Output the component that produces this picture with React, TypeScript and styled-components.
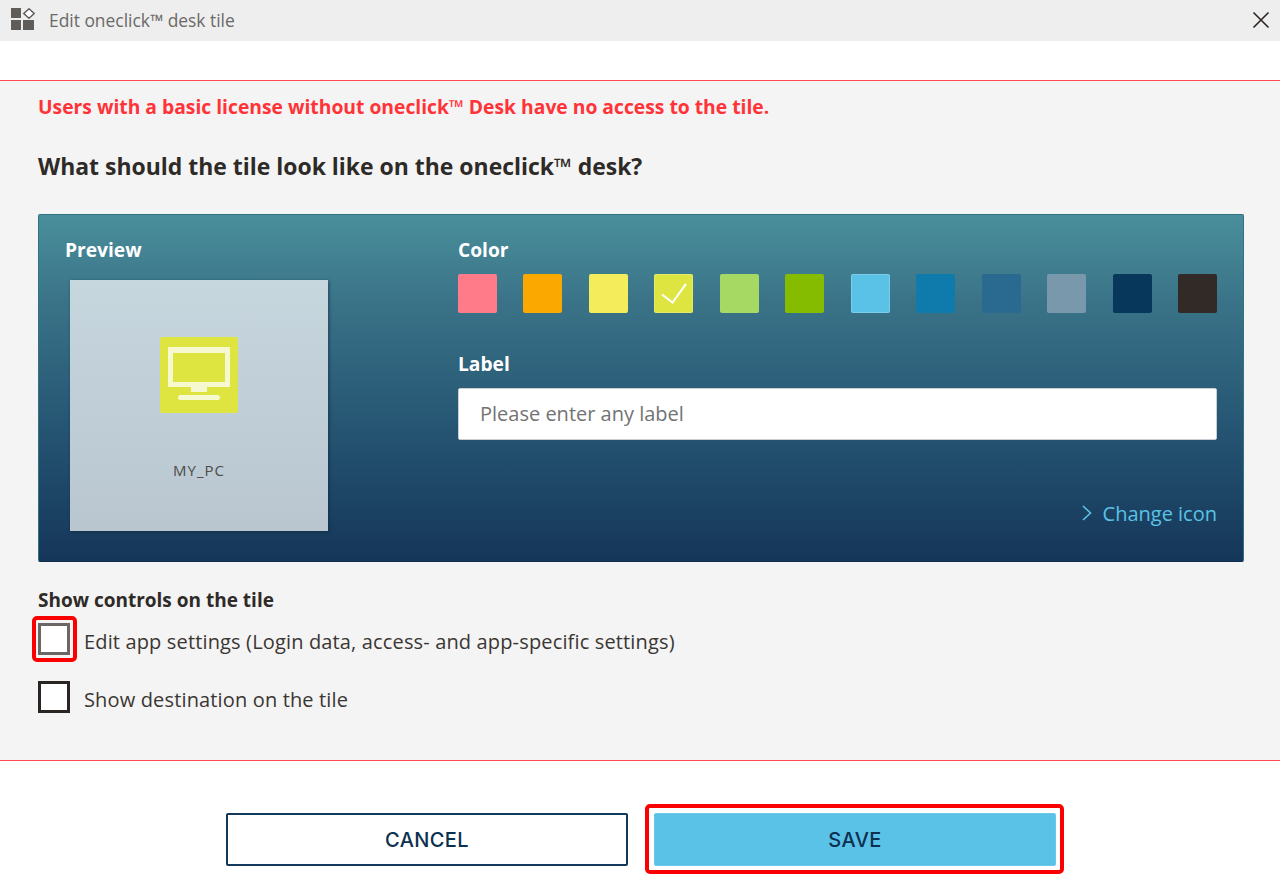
import React from 'react';
import styled, { createGlobalStyle } from 'styled-components';

const GlobalStyle = createGlobalStyle`
  html, body {
    margin: 0;
    padding: 0;
    background: #fff;
    font-family: "Open Sans", "Noto Sans", sans-serif;
  }
  * { box-sizing: border-box; }
`;

const Page = styled.div`
  width: 1280px;
  height: 895px;
  display: flex;
  flex-direction: column;
  overflow: hidden;
`;

const TitleBar = styled.header`
  height: 41px;
  background: #eeeeee;
  display: flex;
  align-items: center;
  padding: 0 10px 2px 11px;
  flex-shrink: 0;
`;

const TitleText = styled.span`
  margin-left: 14px;
  font-size: 17.4px;
  color: #6b6967;
  flex: 1;
`;

const Spacer = styled.div`
  height: 39px;
  background: #fff;
  flex-shrink: 0;
`;

const Body = styled.main`
  height: 681px;
  background: #f4f4f4;
  border-top: 1px solid #ff4a4f;
  border-bottom: 1px solid #ff4a4f;
  padding: 14px 36px 0 38px;
  flex-shrink: 0;
`;

const Warning = styled.p`
  margin: 0;
  height: 24px;
  line-height: 24px;
  font-size: 19.3px;
  font-weight: 700;
  color: #ff3338;
`;

const Question = styled.h2`
  margin: 33px 0 0;
  height: 28px;
  line-height: 28px;
  font-size: 22.95px;
  font-weight: 700;
  color: #2e2a27;
`;

const Panel = styled.section`
  margin-top: 34px;
  height: 348px;
  border-radius: 2px;
  border: 1px solid #2f7283;
  border-bottom-color: #10304f;
  background: linear-gradient(180deg, #4a8f9b 0%, #3a7388 25%, #265673 60%, #153659 100%);
  display: grid;
  grid-template-columns: 419px 759px;
  padding: 23px 0 0;
`;

const PreviewColumn = styled.div`
  padding-left: 26px;
`;

const PanelLabel = styled.div`
  height: 24px;
  line-height: 24px;
  font-size: 19.2px;
  font-weight: 700;
  color: #fff;
`;

const Tile = styled.div`
  margin: 18px 0 0 5px;
  width: 258px;
  height: 251px;
  background: linear-gradient(180deg, #c7d7de 0%, #b9c6d0 100%);
  box-shadow: 1px 1px 3px rgba(10, 30, 50, 0.55);
  display: flex;
  flex-direction: column;
  align-items: center;
  padding-top: 57px;
`;

const TileIcon = styled.div`
  width: 78px;
  height: 76px;
  border-radius: 2px;
  background: #dee540;
  display: flex;
`;

const TileName = styled.div`
  margin-top: 47px;
  font-size: 15px;
  line-height: 20px;
  color: #4f4b48;
  letter-spacing: 1px;
`;

const SettingsColumn = styled.div`
  display: flex;
  flex-direction: column;
`;

const Swatches = styled.div`
  margin-top: 12px;
  display: flex;
  justify-content: space-between;
`;

const Swatch = styled.div<{ $color: string; $light?: boolean }>`
  width: 39px;
  height: 39px;
  border-radius: 2px;
  background: ${(p) => p.$color};
  box-shadow: ${(p) => (p.$light ? 'inset 0 0 0 1px rgba(255,255,255,0.2)' : 'none')};
  display: flex;
  align-items: center;
  justify-content: center;
`;

const LabelHeading = styled(PanelLabel)`
  margin-top: 39px;
`;

const LabelInput = styled.input`
  margin-top: 12px;
  height: 52px;
  width: 100%;
  border: 1px solid #c8ced2;
  border-radius: 2px;
  background: #fff;
  padding: 0 21px 2px;
  font-family: inherit;
  font-size: 20px;
  color: #333;
  &::placeholder {
    color: #737373;
    opacity: 1;
  }
`;

const ChangeIcon = styled.a`
  margin-top: 60px;
  align-self: flex-end;
  display: flex;
  align-items: center;
  gap: 11px;
  height: 26px;
  font-size: 20px;
  color: #5bc2e7;
`;

const ControlsHeading = styled.h3`
  margin: 26px 0 0;
  height: 24px;
  line-height: 24px;
  font-size: 19px;
  font-weight: 700;
  color: #2e2a27;
`;

const CheckRow = styled.label<{ $gap: number }>`
  margin-top: ${(p) => p.$gap}px;
  display: flex;
  align-items: center;
  gap: 14px;
  height: 32px;
  font-size: 20px;
  letter-spacing: 0.15px;
  color: #3a3633;
`;

const CheckText = styled.span`
  padding-top: 4px;
`;

const CheckBox = styled.span<{ $marked?: boolean }>`
  position: relative;
  width: 32px;
  height: 32px;
  flex-shrink: 0;
  background: #fff;
  border: 3px solid ${(p) => (p.$marked ? '#6a6765' : '#2a2522')};
  &::after {
    content: '';
    display: ${(p) => (p.$marked ? 'block' : 'none')};
    position: absolute;
    inset: -10px -10px -10px -9px;
    border: 4px solid #fa0000;
    border-radius: 5px;
  }
`;

const Footer = styled.footer`
  flex: 1;
  background: #fff;
  display: flex;
  justify-content: center;
  gap: 26px;
  padding: 52px 0 0 2px;
`;

const Button = styled.button<{ $primary?: boolean; $marked?: boolean }>`
  position: relative;
  width: 402px;
  height: 53px;
  border-radius: 2px;
  border: ${(p) => (p.$primary ? '1px solid #6cc8e8' : '2px solid #12395a')};
  background: ${(p) => (p.$primary ? '#5bc2e7' : '#fff')};
  color: #0c3050;
  font-family: "Inter", "Lato", sans-serif;
  font-size: 20px;
  font-weight: 500;
  letter-spacing: 0.4px;
  &::after {
    content: '';
    display: ${(p) => (p.$marked ? 'block' : 'none')};
    position: absolute;
    inset: -10px -9px -9px -10px;
    border: 4px solid #fa0000;
    border-radius: 5px;
  }
`;

const colors = [
  { c: '#ff7b8a' },
  { c: '#fba800' },
  { c: '#f4ec5a' },
  { c: '#dee540', checked: true },
  { c: '#a6d864' },
  { c: '#86bc00' },
  { c: '#5bc2e7', light: true },
  { c: '#0f7bac' },
  { c: '#2a6a90' },
  { c: '#7a98ac' },
  { c: '#07375a' },
  { c: '#322a27' },
];

const AppTilesIcon = () => (
  <svg width="24" height="24" viewBox="0 0 24 24">
    <rect x="0" y="0" width="10" height="10" fill="#5f5c5a" />
    <rect x="0" y="12" width="10" height="10" fill="#5f5c5a" />
    <rect x="12" y="12" width="11" height="10" fill="#5f5c5a" />
    <path d="M18 0.8 L23.2 5.5 L18 10.2 L12.8 5.5 Z" fill="#fff" stroke="#5f5c5a" strokeWidth="1.5" />
  </svg>
);

const CloseIcon = () => (
  <svg width="18" height="18" viewBox="0 0 18 18">
    <path d="M1.5 1.5 L16.5 16.5 M16.5 1.5 L1.5 16.5" stroke="#2a2522" strokeWidth="1.6" fill="none" />
  </svg>
);

const MonitorIcon = () => (
  <svg width="78" height="76" viewBox="0 0 78 76">
    <path fillRule="evenodd" d="M8 10 H70 V50 H8 Z M13 16 V45 H65 V16 Z" fill="#f6f8cf" />
    <rect x="31" y="50" width="16" height="5" fill="#f6f8cf" />
    <rect x="18" y="58" width="42" height="5" rx="2.5" fill="#f6f8cf" />
  </svg>
);

const CheckMark = () => (
  <svg width="28" height="24" viewBox="0 0 28 24">
    <path d="M2 12.5 L12.5 20.5 L26 1.8" stroke="#fff" strokeWidth="2" fill="none" />
  </svg>
);

const Chevron = () => (
  <svg width="10" height="16" viewBox="0 0 10 16">
    <path d="M1 1 L8.5 8 L1 15" stroke="#5bc2e7" strokeWidth="1.6" fill="none" />
  </svg>
);

export default function App() {
  return (
    <Page>
      <GlobalStyle />
      <TitleBar>
        <AppTilesIcon />
        <TitleText>Edit oneclick™ desk tile</TitleText>
        <CloseIcon />
      </TitleBar>
      <Spacer />
      <Body>
        <Warning>Users with a basic license without oneclick™ Desk have no access to the tile.</Warning>
        <Question>What should the tile look like on the oneclick™ desk?</Question>
        <Panel>
          <PreviewColumn>
            <PanelLabel>Preview</PanelLabel>
            <Tile>
              <TileIcon>
                <MonitorIcon />
              </TileIcon>
              <TileName>MY_PC</TileName>
            </Tile>
          </PreviewColumn>
          <SettingsColumn>
            <PanelLabel>Color</PanelLabel>
            <Swatches>
              {colors.map((s) => (
                <Swatch key={s.c} $color={s.c} $light={s.light || s.checked}>
                  {s.checked && <CheckMark />}
                </Swatch>
              ))}
            </Swatches>
            <LabelHeading>Label</LabelHeading>
            <LabelInput placeholder="Please enter any label" readOnly />
            <ChangeIcon>
              <Chevron />
              Change icon
            </ChangeIcon>
          </SettingsColumn>
        </Panel>
        <ControlsHeading>Show controls on the tile</ControlsHeading>
        <CheckRow $gap={11}>
          <CheckBox $marked />
          <CheckText>Edit app settings (Login data, access- and app-specific settings)</CheckText>
        </CheckRow>
        <CheckRow $gap={26}>
          <CheckBox />
          <CheckText>Show destination on the tile</CheckText>
        </CheckRow>
      </Body>
      <Footer>
        <Button>CANCEL</Button>
        <Button $primary $marked>SAVE</Button>
      </Footer>
    </Page>
  );
}
